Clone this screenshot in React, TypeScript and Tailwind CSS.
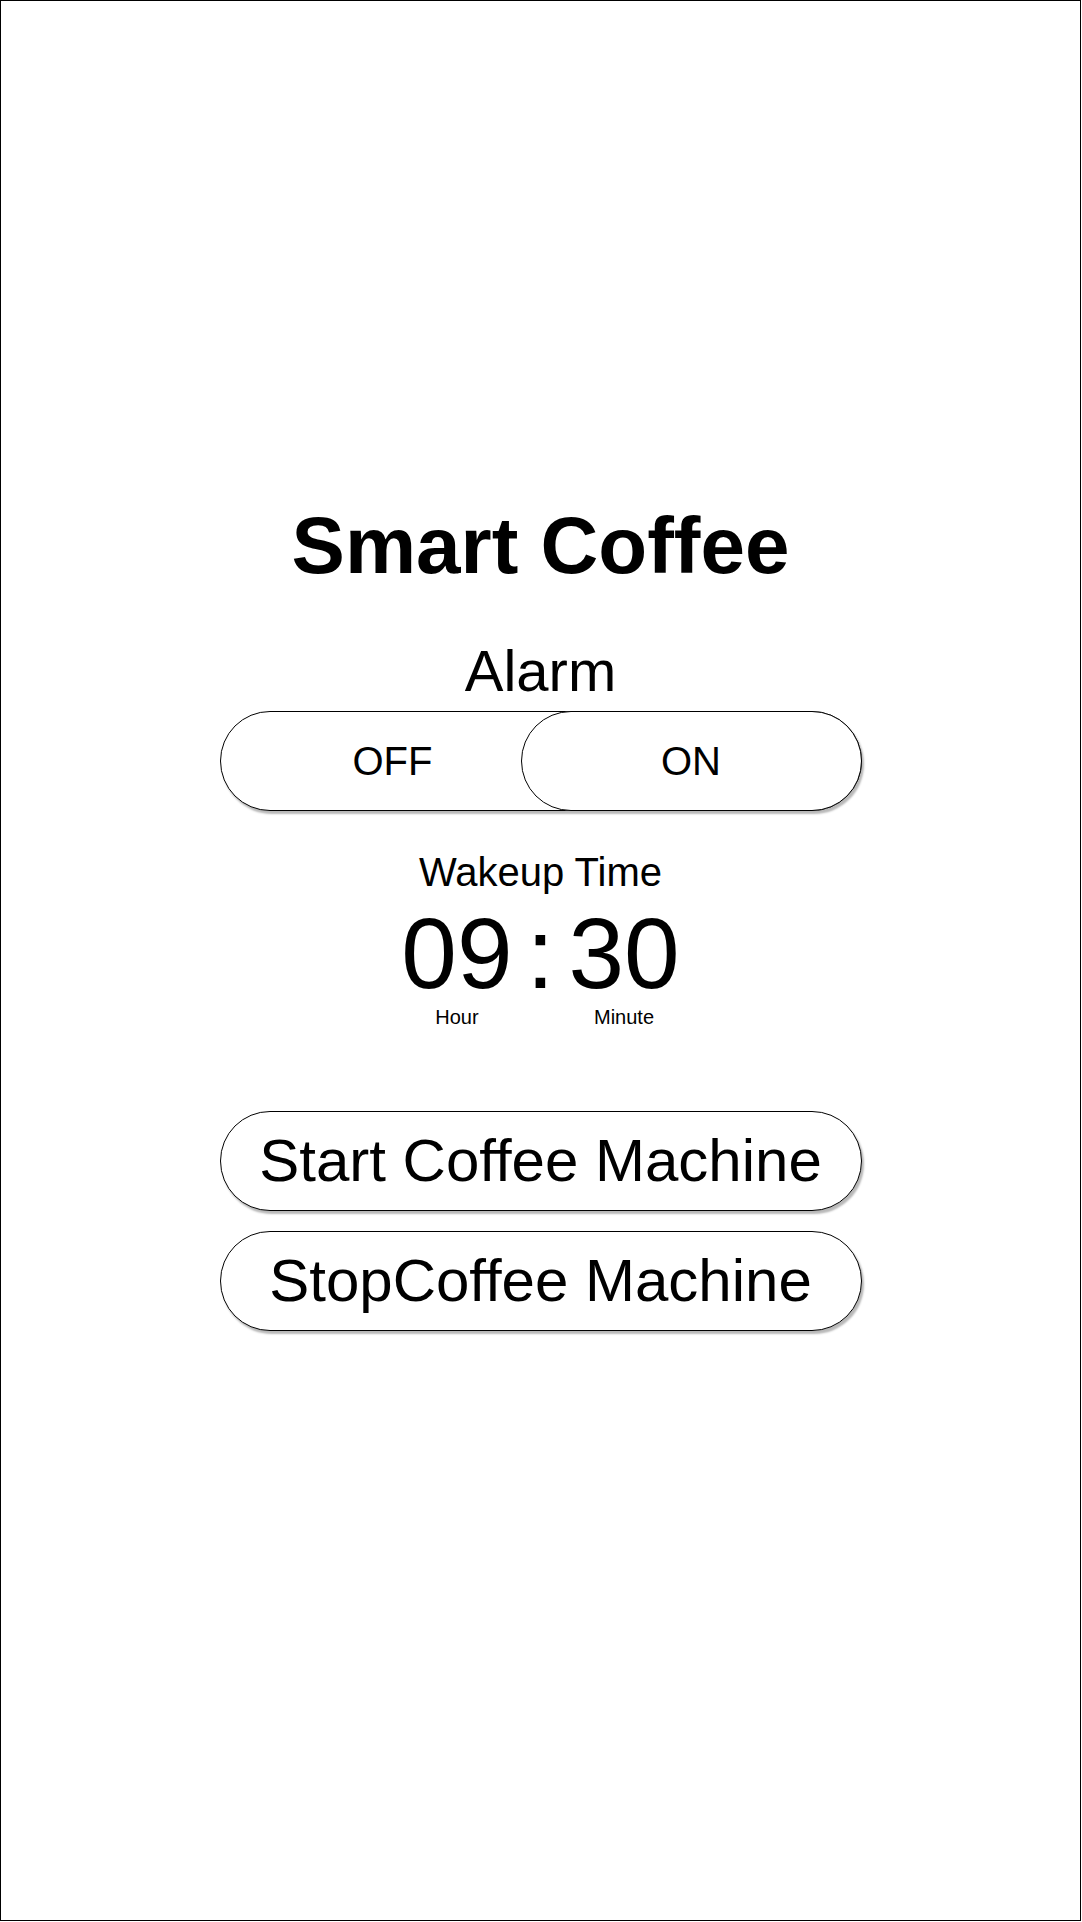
import React from "react";

export default function App() {
  const pill =
    "rounded-full border border-black bg-white shadow-[2px_3px_2px_rgba(0,0,0,0.28)]";
  return (
    <div
      className="w-[1082px] h-[1922px] bg-white text-black"
      style={{ fontFamily: '"Liberation Sans", Arial, sans-serif' }}
    >
      <div className="w-[1081px] h-[1921px] border border-black flex flex-col items-center pt-[505px]">
        <h1 className="text-[80px] font-bold leading-none">Smart Coffee</h1>
        <div className="mt-[56px] text-[58px] leading-none">Alarm</div>
        <div className={`relative mt-[11px] w-[642px] h-[100px] ${pill}`}>
          <div className="w-[344px] h-full flex items-center justify-center text-[40px] leading-none">
            OFF
          </div>
          <div className="absolute right-[-1px] top-[-1px] w-[341px] h-[100px] rounded-full border border-black bg-white flex items-center justify-center text-[40px] leading-none">
            ON
          </div>
        </div>
        <div className="mt-[41px] text-[40px] leading-none">Wakeup Time</div>
        <div className="mt-[11px] flex items-start gap-[14px]">
          <div className="flex flex-col items-center">
            <div className="text-[100px] leading-none">09</div>
            <div className="mt-[4px] text-[20px] leading-none">Hour</div>
          </div>
          <div className="text-[100px] leading-none">:</div>
          <div className="flex flex-col items-center">
            <div className="text-[100px] leading-none">30</div>
            <div className="mt-[4px] text-[20px] leading-none">Minute</div>
          </div>
        </div>
        <button
          className={`mt-[84px] w-[642px] h-[100px] flex items-center justify-center text-[60px] leading-none ${pill}`}
        >
          Start Coffee Machine
        </button>
        <button
          className={`mt-[20px] w-[642px] h-[100px] flex items-center justify-center text-[60px] leading-none ${pill}`}
        >
          StopCoffee Machine
        </button>
      </div>
    </div>
  );
}
